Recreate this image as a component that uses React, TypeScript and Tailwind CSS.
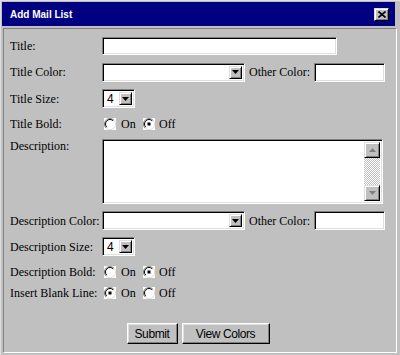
import React from "react";

const serif = { fontFamily: '"Liberation Serif", "Times New Roman", serif' };
const sans = { fontFamily: '"Liberation Sans", Arial, sans-serif' };

function Inset({ className = "", children }: { className?: string; children?: React.ReactNode }) {
  return (
    <div
      className={
        "border border-t-[#808080] border-l-[#808080] border-b-white border-r-white shadow-[inset_1px_1px_0_#000,inset_-1px_-1px_0_#dfdfdf] bg-white " +
        className
      }
    >
      {children}
    </div>
  );
}

function Arrow({ up = false, color = "#000" }: { up?: boolean; color?: string }) {
  return (
    <svg width="7" height="4" viewBox="0 0 7 4">
      {up ? <polygon points="0,4 7,4 3.5,0" fill={color} /> : <polygon points="0,0 7,0 3.5,4" fill={color} />}
    </svg>
  );
}

function BevelBox({ className = "", children }: { className?: string; children?: React.ReactNode }) {
  return (
    <div
      className={
        "bg-[#c0c0c0] border border-t-[#dfdfdf] border-l-[#dfdfdf] border-b-black border-r-black shadow-[inset_1px_1px_0_#fff,inset_-1px_-1px_0_#808080] flex items-center justify-center " +
        className
      }
    >
      {children}
    </div>
  );
}

function Select({ width, value = "" }: { width: string; value?: string }) {
  return (
    <Inset className={"h-[19px] flex items-stretch p-[2px] " + width}>
      <div className="flex-1 text-[12px] leading-[15px] pl-[2px] text-black" style={sans}>
        {value}
      </div>
      <BevelBox className="w-[13px]">
        <Arrow />
      </BevelBox>
    </Inset>
  );
}

function Radio({ checked }: { checked: boolean }) {
  return (
    <svg width="12" height="12" viewBox="0 0 12 12" className="shrink-0">
      <rect x="0" y="0" width="12" height="12" fill="#fff" />
      <path d="M10 2.2 A5 5 0 0 0 2 10" fill="none" stroke="#808080" strokeWidth="1" />
      <path d="M9.2 2.8 A4 4 0 0 0 2.8 9.2" fill="none" stroke="#000" strokeWidth="1" />
      <path d="M2 10 A5 5 0 0 0 10 2" fill="none" stroke="#dfdfdf" strokeWidth="1" />
      {checked && <rect x="4.5" y="4.5" width="3" height="3" fill="#000" />}
    </svg>
  );
}

function RadioPair({ on }: { on: boolean }) {
  return (
    <div className="flex items-center text-[12px]" style={serif}>
      <div className="ml-[2px]">
        <Radio checked={on} />
      </div>
      <span className="ml-[5px] w-[22px]">On</span>
      <Radio checked={!on} />
      <span className="ml-[4px]">Off</span>
    </div>
  );
}

function Row({ h, label, children, top = false }: { h: string; label: string; children?: React.ReactNode; top?: boolean }) {
  return (
    <div className={"flex " + (top ? "items-start " : "items-center ") + h}>
      <div className={"w-[98px] pl-[6px] text-[12px] text-black " + (top ? "pt-[1px]" : "")} style={serif}>
        {label}
      </div>
      <div className="flex items-center">{children}</div>
    </div>
  );
}

function OtherColor() {
  return (
    <>
      <Select width="w-[143px]" />
      <span className="ml-[4px] mr-[4px] text-[12px]" style={serif}>
        Other Color:
      </span>
      <Inset className="w-[71px] h-[19px]" />
    </>
  );
}

function Button({ w, children }: { w: string; children: React.ReactNode }) {
  return (
    <div
      className={
        "h-[21px] bg-[#c0c0c0] border border-t-white border-l-white border-b-black border-r-black shadow-[inset_-1px_-1px_0_#808080,inset_1px_1px_0_#dfdfdf] flex items-center justify-center text-[12px] tracking-[-0.4px] text-black " +
        w
      }
      style={sans}
    >
      {children}
    </div>
  );
}

export default function App() {
  return (
    <div className="w-[400px] h-[355px] bg-[#c0c0c0] border-t border-l border-t-[#dfdfdf] border-l-[#dfdfdf] pt-[1px] pl-[1px] pr-[3px] pb-[2px] flex flex-col">
      <div className="h-[24px] bg-[#000080] flex items-center justify-between pl-[8px] pr-[6px] mr-[2px]">
        <span className="text-white font-bold text-[10px]" style={sans}>
          Add Mail List
        </span>
        <BevelBox className="w-[15px] h-[13px]">
          <svg width="8" height="7" viewBox="0 0 8 7">
            <path d="M0.5 0.5 L7.5 6.5 M7.5 0.5 L0.5 6.5" stroke="#000" strokeWidth="1.6" />
          </svg>
        </BevelBox>
      </div>
      <div className="mt-[2px] ml-[1px] flex-1 border border-t-[#808080] border-l-[#808080] border-b-white border-r-white flex flex-col pt-[3px]">
        <Row h="h-[27px]" label="Title:">
          <Inset className="w-[235px] h-[18px]" />
        </Row>
        <Row h="h-[26px]" label="Title Color:">
          <OtherColor />
        </Row>
        <Row h="h-[27px]" label="Title Size:">
          <Select width="w-[33px]" value="4" />
        </Row>
        <Row h="h-[24px]" label="Title Bold:">
          <RadioPair on={false} />
        </Row>
        <Row h="h-[72px]" label="Description:" top>
          <Inset className="w-[281px] h-[65px] mt-[3px] flex justify-end p-[2px]">
            <div className="w-[16px] flex flex-col">
              <BevelBox className="h-[16px]">
                <Arrow up color="#808080" />
              </BevelBox>
              <div className="flex-1 bg-[repeating-conic-gradient(#c0c0c0_0_25%,#fff_0_50%)] bg-[length:2px_2px]" />
              <BevelBox className="h-[16px]">
                <Arrow color="#808080" />
              </BevelBox>
            </div>
          </Inset>
        </Row>
        <Row h="h-[25px]" label="Description Color:">
          <OtherColor />
        </Row>
        <Row h="h-[27px]" label="Description Size:">
          <Select width="w-[33px]" value="4" />
        </Row>
        <Row h="h-[23px]" label="Description Bold:">
          <RadioPair on={false} />
        </Row>
        <Row h="h-[20px]" label="Insert Blank Line:">
          <RadioPair on={true} />
        </Row>
        <div className="flex justify-center gap-[4px] mt-[20px] pr-[4px]">
          <Button w="w-[51px]">Submit</Button>
          <Button w="w-[88px]">View Colors</Button>
        </div>
      </div>
    </div>
  );
}
